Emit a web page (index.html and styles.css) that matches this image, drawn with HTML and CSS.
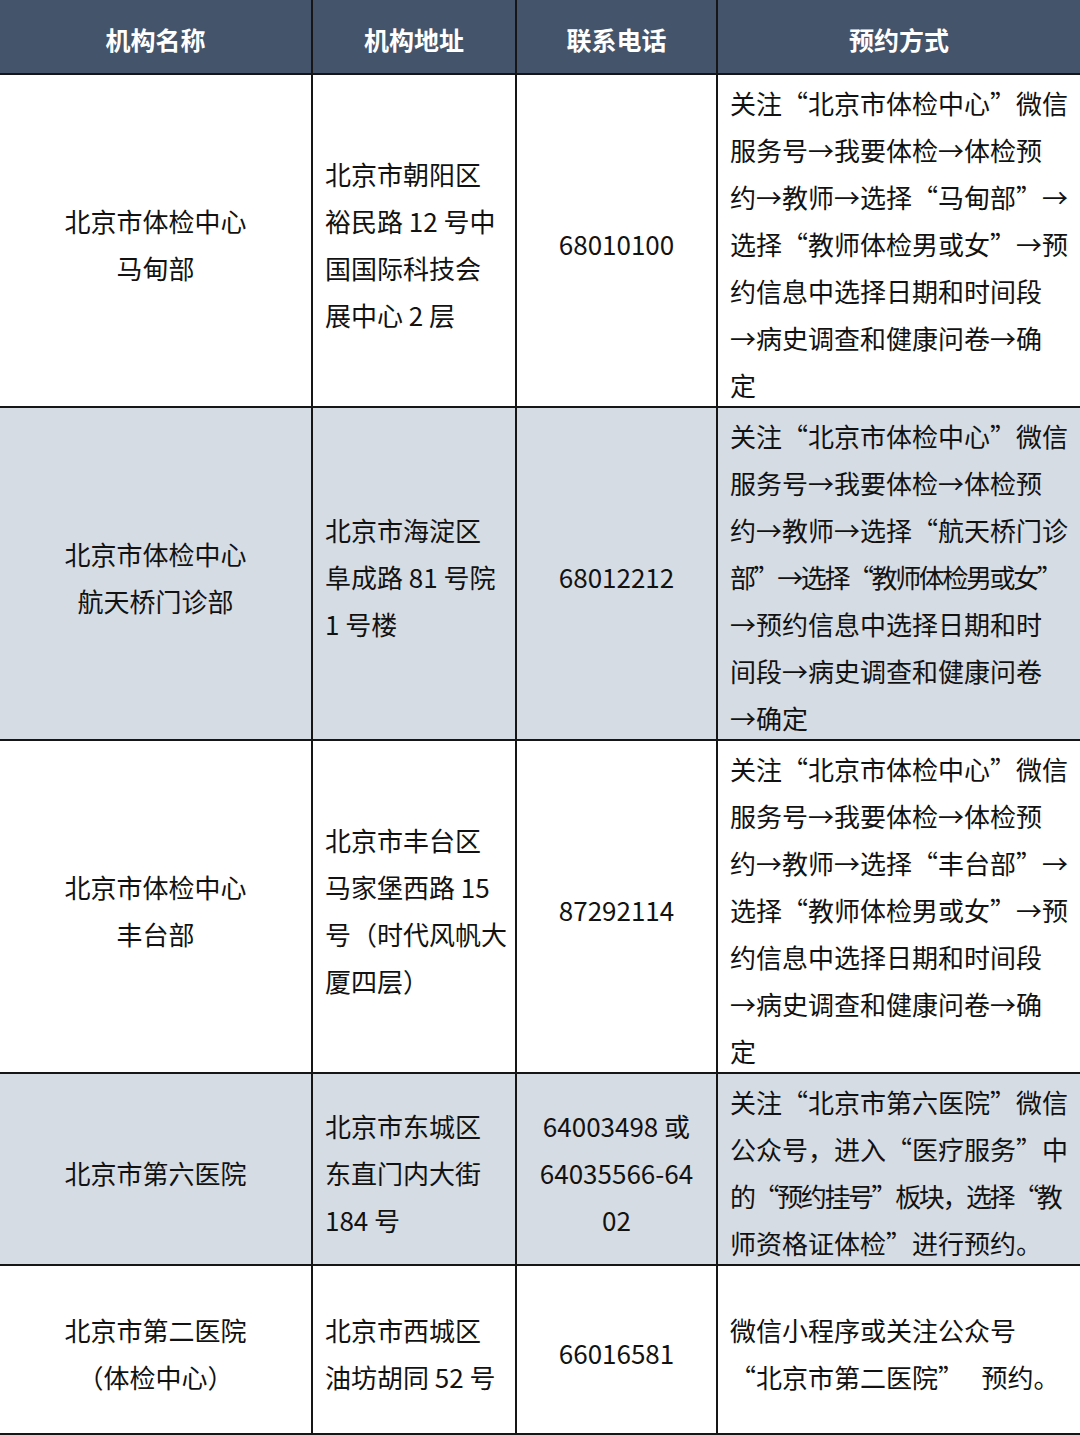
FILE: index.html
```html
<!DOCTYPE html>
<html lang="zh-CN">
<head>
<meta charset="utf-8">
<title>体检机构</title>
<link rel="stylesheet" href="styles.css">
</head>
<body>
<table class="tbl">
  <colgroup>
    <col class="c1"><col class="c2"><col class="c3"><col class="c4">
  </colgroup>
  <thead>
    <tr class="head">
      <th><div class="in">机构名称</div></th><th><div class="in">机构地址</div></th><th><div class="in">联系电话</div></th><th><div class="in">预约方式</div></th>
    </tr>
  </thead>
  <tbody>
    <tr class="r-tall">
      <td class="name"><div class="in">北京市体检中心<br>马甸部</div></td>
      <td class="addr"><div class="in">北京市朝阳区<br>裕民路 12 号中<br>国国际科技会<br>展中心 2 层</div></td>
      <td class="tel"><div class="in">68010100</div></td>
      <td class="way"><div class="in">关注“北京市体检中心”微信<br>服务号→我要体检→体检预<br>约→教师→选择“马甸部”→<br>选择“教师体检男或女”→预<br>约信息中选择日期和时间段<br>→病史调查和健康问卷→确<br>定</div></td>
    </tr>
    <tr class="r-tall alt">
      <td class="name"><div class="in">北京市体检中心<br>航天桥门诊部</div></td>
      <td class="addr"><div class="in">北京市海淀区<br>阜成路 81 号院<br>1 号楼</div></td>
      <td class="tel"><div class="in">68012212</div></td>
      <td class="way"><div class="in">关注“北京市体检中心”微信<br>服务号→我要体检→体检预<br>约→教师→选择“航天桥门诊<br><span class="tight">部”→选择“教师体检男或女”</span><br>→预约信息中选择日期和时<br>间段→病史调查和健康问卷<br>→确定</div></td>
    </tr>
    <tr class="r-tall">
      <td class="name"><div class="in">北京市体检中心<br>丰台部</div></td>
      <td class="addr"><div class="in">北京市丰台区<br>马家堡西路 15<br>号（时代风帆大<br>厦四层）</div></td>
      <td class="tel"><div class="in">87292114</div></td>
      <td class="way"><div class="in">关注“北京市体检中心”微信<br>服务号→我要体检→体检预<br>约→教师→选择“丰台部”→<br>选择“教师体检男或女”→预<br>约信息中选择日期和时间段<br>→病史调查和健康问卷→确<br>定</div></td>
    </tr>
    <tr class="r-mid alt">
      <td class="name"><div class="in">北京市第六医院</div></td>
      <td class="addr"><div class="in">北京市东城区<br>东直门内大街<br>184 号</div></td>
      <td class="tel"><div class="in">64003498 或<br>64035566-64<br>02</div></td>
      <td class="way"><div class="in">关注“北京市第六医院”微信<br>公众号，进入“医疗服务”中<br><span class="tight">的“预约挂号”板块，选择“教</span><br>师资格证体检”进行预约。</div></td>
    </tr>
    <tr class="r-low">
      <td class="name"><div class="in">北京市第二医院<br>（体检中心）</div></td>
      <td class="addr"><div class="in">北京市西城区<br>油坊胡同 52 号</div></td>
      <td class="tel"><div class="in">66016581</div></td>
      <td class="way"><div class="in">微信小程序或关注公众号<br>“北京市第二医院”&nbsp;&nbsp;&nbsp;预约。</div></td>
    </tr>
  </tbody>
</table>
</body>
</html>
```

FILE: styles.css
```css
html, body {
  margin: 0;
  padding: 0;
  background: #ffffff;
}
body {
  font-family: "Noto Sans CJK SC", "Noto Sans", sans-serif;
  color: #121212;
  font-size: 26px;
  line-height: 47px;
}
.tbl {
  width: 1080px;
  border-collapse: collapse;
  table-layout: fixed;
}
.c1 { width: 312px; }
.c2 { width: 204px; }
.c3 { width: 201px; }
.c4 { width: 363px; }
.tbl th, .tbl td {
  border-right: 2px solid #161616;
  border-bottom: 2px solid #161616;
  vertical-align: middle;
  padding: 0 12px;
  white-space: nowrap;
  overflow: hidden;
}
.tbl th:last-child, .tbl td:last-child {
  border-right: none;
}
.in {
  padding-top: 3px;
  margin-bottom: -3px;
}
.head {
  height: 74px;
  background: #44546a;
}
.head th {
  color: #ffffff;
  font-weight: 700;
  text-align: center;
  font-size: 25px;
}
.r-tall { height: 333px; }
.r-mid { height: 192px; }
.r-low { height: 169px; }
.alt { background: #d6dce4; }
.name, .tel { text-align: center; }
.addr, .way { text-align: left; }
.tight { letter-spacing: -2.4px; }
```
